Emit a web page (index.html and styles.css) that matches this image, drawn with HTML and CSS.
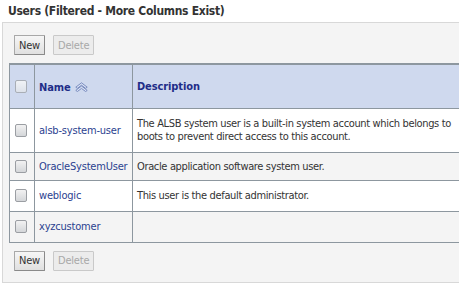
FILE: index.html
```html
<!DOCTYPE html>
<html>
<head>
<meta charset="utf-8">
<link rel="stylesheet" href="styles.css">
</head>
<body>
<h1 class="title">Users (Filtered - More Columns Exist)</h1>
<div class="panel">
  <div class="toolbar">
    <button class="btn">New</button>
    <button class="btn btn-disabled" disabled>Delete</button>
  </div>
  <table class="grid">
    <colgroup>
      <col class="c-check">
      <col class="c-name">
      <col class="c-desc">
    </colgroup>
    <thead>
      <tr class="head">
        <th><span class="cb cb-head"></span></th>
        <th><span class="hname">Name</span><svg class="sort" width="13" height="10" viewBox="0 0 13 10"><path d="M0.8 5.2 L6.5 0.8 L12.2 5.2 L10.6 6.3 L6.5 3.2 L2.4 6.3 Z" fill="#dbe3f5" stroke="#6f83b9" stroke-width="0.9" stroke-linejoin="round"/><path d="M0.8 8.4 L6.5 4.0 L12.2 8.4 L10.6 9.5 L6.5 6.4 L2.4 9.5 Z" fill="#dbe3f5" stroke="#6f83b9" stroke-width="0.9" stroke-linejoin="round"/></svg></th>
        <th>Description</th>
      </tr>
    </thead>
    <tbody>
      <tr class="r1">
        <td><span class="cb"></span></td>
        <td><a class="lnk">alsb-system-user</a></td>
        <td class="desc">The ALSB system user is a built-in system account which belongs to<br>boots to prevent direct access to this account.</td>
      </tr>
      <tr class="r2 alt">
        <td><span class="cb"></span></td>
        <td><a class="lnk">OracleSystemUser</a></td>
        <td class="desc">Oracle application software system user.</td>
      </tr>
      <tr class="r3">
        <td><span class="cb"></span></td>
        <td><a class="lnk">weblogic</a></td>
        <td class="desc">This user is the default administrator.</td>
      </tr>
      <tr class="r4 alt">
        <td><span class="cb"></span></td>
        <td><a class="lnk">xyzcustomer</a></td>
        <td class="desc"></td>
      </tr>
    </tbody>
  </table>
  <div class="toolbar bottom">
    <button class="btn">New</button>
    <button class="btn btn-disabled" disabled>Delete</button>
  </div>
</div>
</body>
</html>
```
FILE: styles.css
```css
html, body {
  margin: 0;
  padding: 0;
  background: #ffffff;
  overflow: hidden;
  width: 459px;
  height: 285px;
}
body {
  font-family: "DejaVu Sans Condensed", "Liberation Sans", sans-serif;
  font-size: 11px;
  color: #333333;
}
.title {
  margin: 0;
  height: 22px;
  padding: 4px 0 0 8px;
  box-sizing: border-box;
  font-size: 12px;
  font-weight: bold;
  color: #333333;
  letter-spacing: -0.3px;
  white-space: nowrap;
}
.panel {
  margin-left: 2px;
  width: 500px;
  border: 1px solid #d8d8d8;
  background: #f4f4f4;
  padding: 12px 0 11px 6px;
  box-sizing: border-box;
}
.toolbar {
  display: flex;
  gap: 8px;
  padding-left: 5px;
}
.toolbar.bottom {
  margin-top: 8px;
}
.btn {
  font-family: inherit;
  font-size: 11px;
  letter-spacing: -0.2px;
  height: 20px;
  padding: 0 4px;
  margin: 0;
  color: #333333;
  background: linear-gradient(#f6f6f6, #e0e0e0);
  border: 1px solid #a8a8a8;
  border-right-color: #8a8a8a;
  border-bottom-color: #8a8a8a;
  border-radius: 1px;
}
.btn-disabled {
  color: #a8a8a8;
  background: #ececec;
  border: 1px solid #c9c9c9;
}
.grid {
  margin-top: 8px;
  border-collapse: collapse;
  table-layout: fixed;
  width: 480px;
  background: #ffffff;
}
.c-check { width: 25px; }
.c-name { width: 98px; }
.c-desc { width: 357px; }
.grid th, .grid td {
  border: 1px solid #8d979f;
  padding: 0 4px;
  text-align: left;
  vertical-align: middle;
  white-space: nowrap;
  overflow: hidden;
}
.grid th:first-child, .grid td:first-child {
  padding: 0 0 0 5px;
}
.head {
  height: 44px;
  background: #cfd9ee;
}
.head th {
  font-weight: bold;
  color: #1f2d88;
  font-size: 11px;
  letter-spacing: -0.1px;
  border-top: 2px solid #8d979f;
}
.hname {
  vertical-align: middle;
}
.sort {
  vertical-align: middle;
  margin-left: 4px;
}
.r1 { height: 44px; }
.r2 { height: 28px; }
.r3 { height: 31px; }
.r4 { height: 31px; }
.alt { background: #f4f4f4; }
.lnk {
  color: #2b4290;
  text-decoration: none;
  letter-spacing: -0.2px;
}
.desc {
  line-height: 13px;
  color: #333333;
  letter-spacing: -0.35px;
}
.cb {
  display: inline-block;
  width: 10px;
  height: 11px;
  border: 1px solid #9b9ea3;
  border-radius: 2px;
  background: linear-gradient(#f2f2f2, #d4d6d9);
  vertical-align: middle;
}
.cb-head {
  border-color: #a9aeb6;
  background: linear-gradient(#f0f2f6, #dde2ea);
}
```
